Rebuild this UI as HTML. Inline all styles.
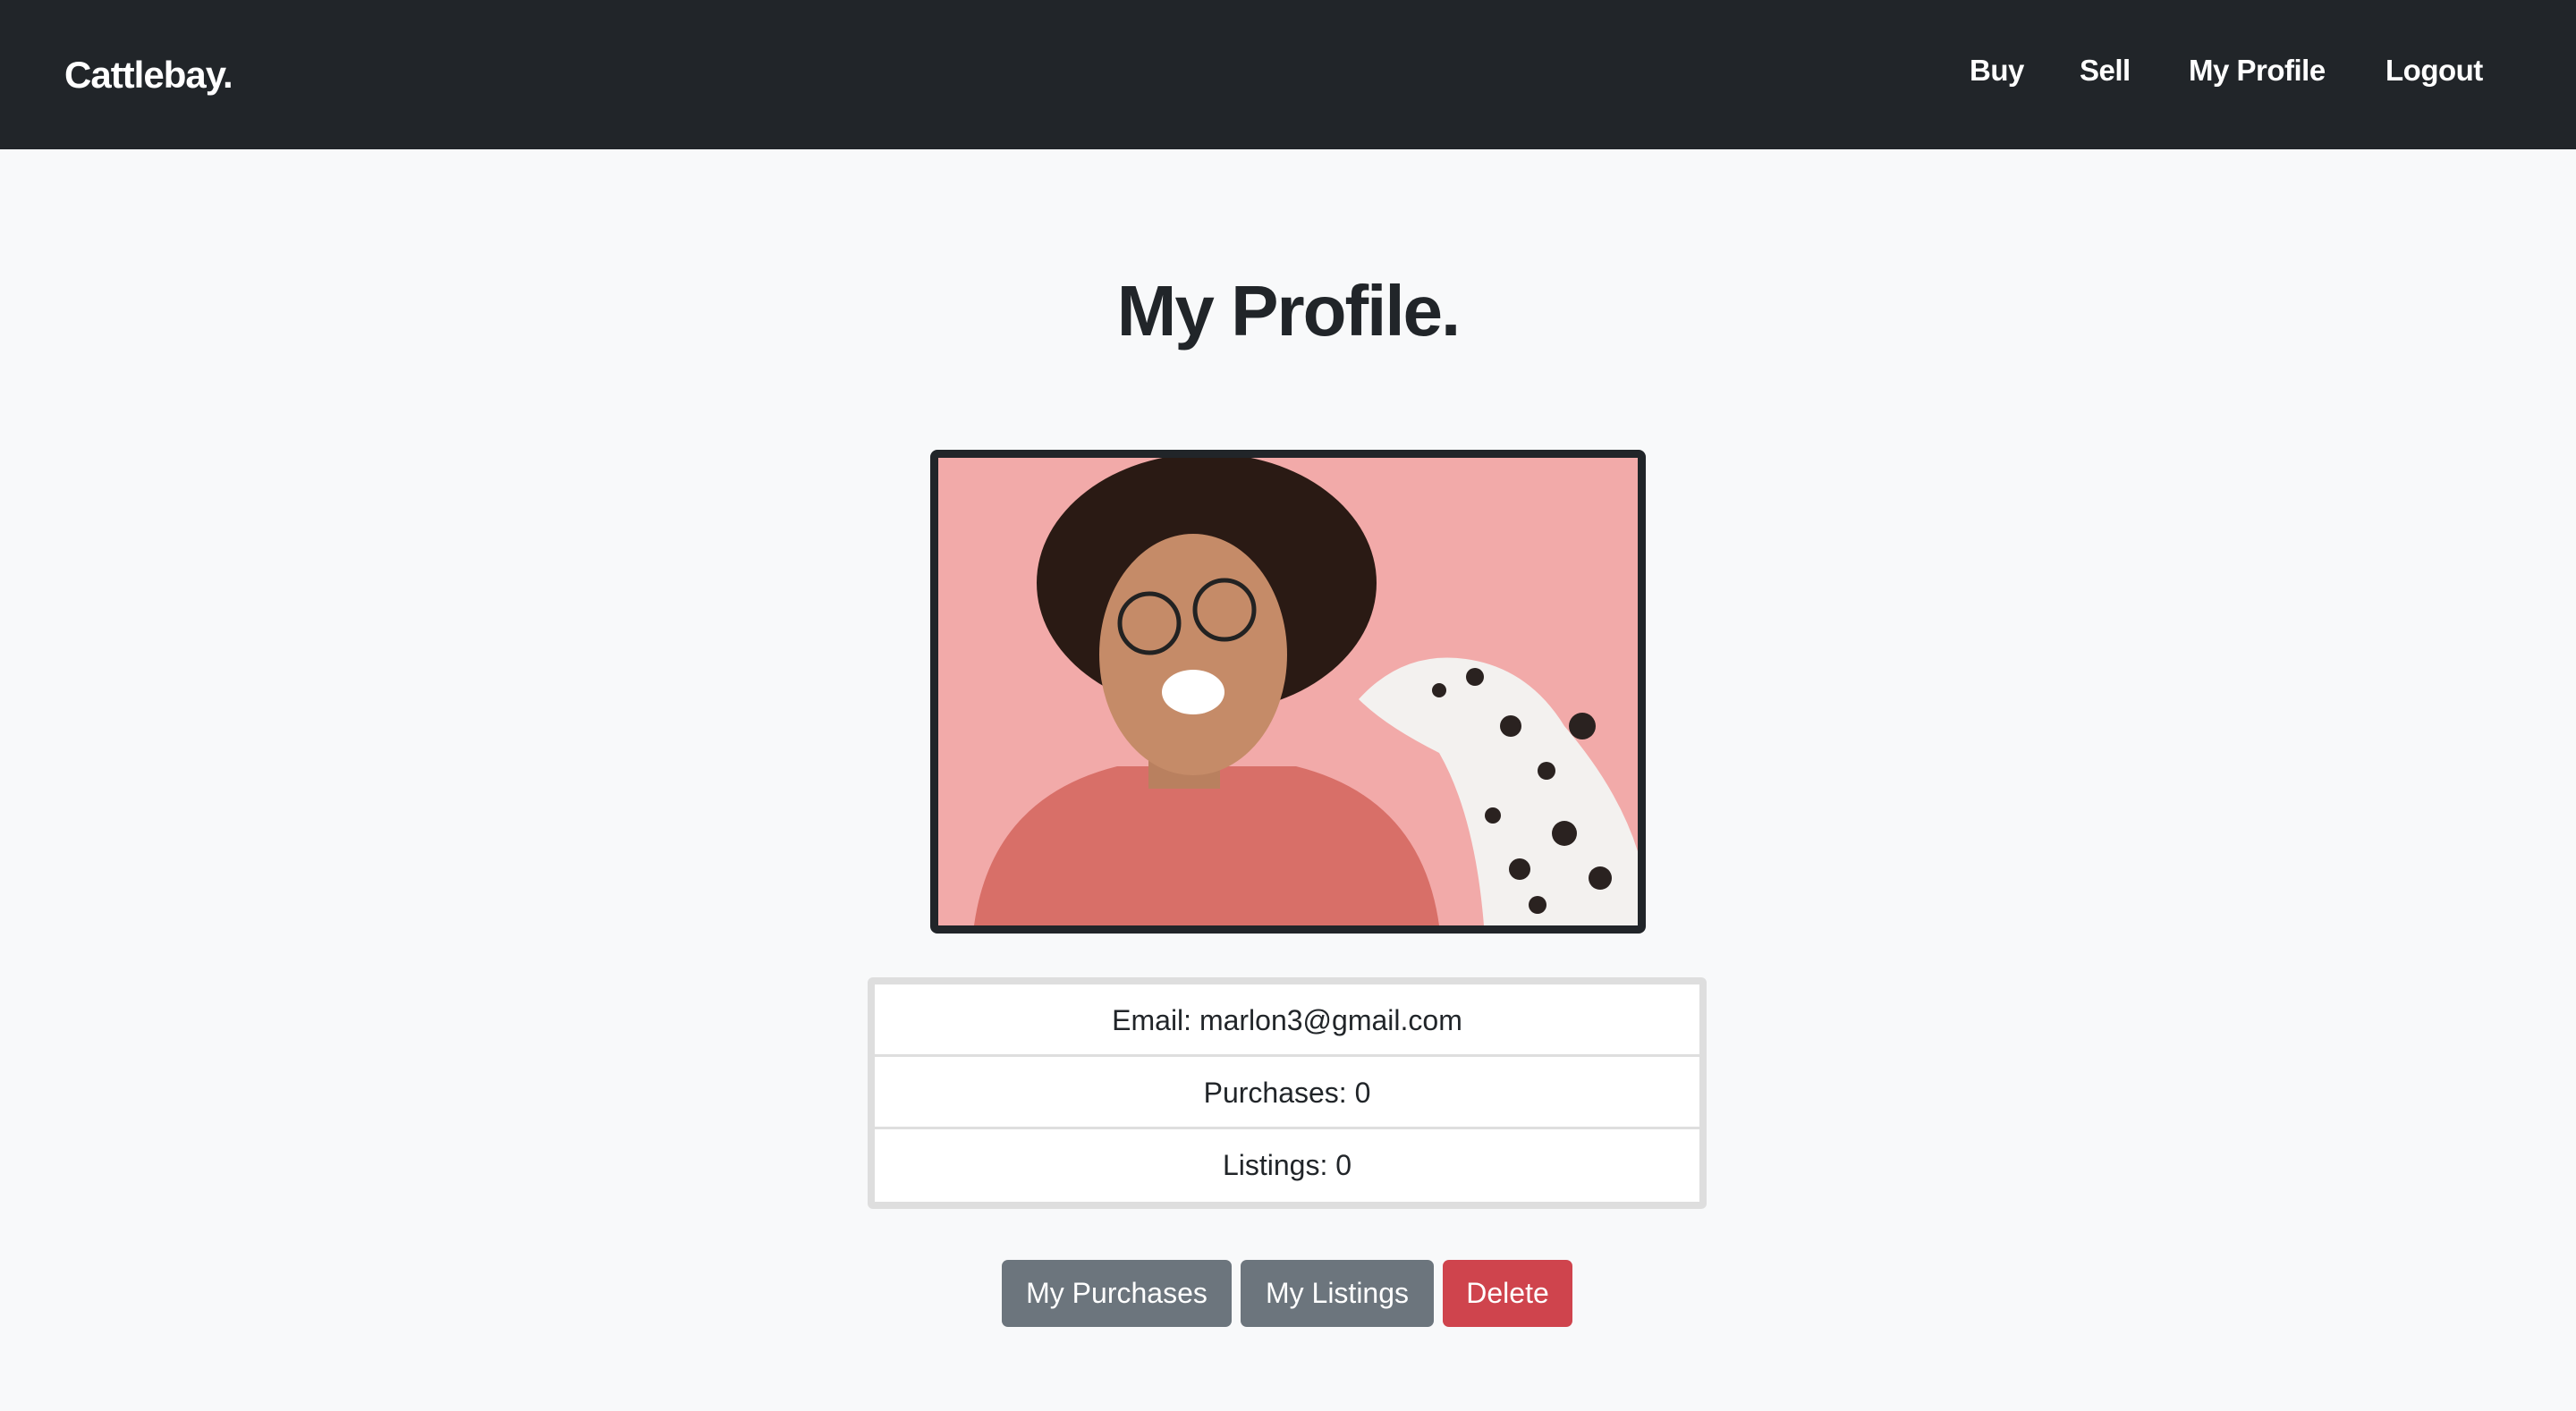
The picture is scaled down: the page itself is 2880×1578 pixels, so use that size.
<!DOCTYPE html>
<html><head><meta charset="utf-8"><style>
*{box-sizing:border-box;margin:0;padding:0}
body{width:2880px;height:1578px;background:#f8f9fa;font-family:"Liberation Sans",sans-serif;color:#212529;position:relative;overflow:hidden}
.nav{position:absolute;left:0;top:0;width:2880px;height:167px;background:#212529}
.brand{position:absolute;left:72px;top:60px;font-size:42px;font-weight:bold;color:#fff;letter-spacing:-1px}
.nav a{position:absolute;top:60px;font-size:33px;font-weight:bold;color:#fff;letter-spacing:-0.5px}
h1{position:absolute;left:0;width:2880px;top:302px;text-align:center;font-size:80px;font-weight:bold;letter-spacing:-2px}
.frame{position:absolute;left:1040px;top:503px;width:800px;height:541px;border:9px solid #212529;border-radius:8px;overflow:hidden;background:#f2aaa9}
.info{position:absolute;left:970px;top:1093px;width:938px;height:259px;border:8px solid #dedede;border-radius:6px;background:#fff}
.row{height:81px;border-bottom:3px solid #dedede;text-align:center;font-size:32px;line-height:81px}
.row:last-child{border-bottom:none}
.btn{position:absolute;top:1409px;height:75px;border-radius:7px;color:#fff;font-size:32px;line-height:75px;text-align:center}
</style></head><body>
<div class="nav"><div class="brand">Cattlebay.</div>
<a style="left:2202px">Buy</a><a style="left:2325px">Sell</a><a style="left:2447px">My Profile</a><a style="left:2667px">Logout</a></div>
<h1>My Profile.</h1>
<div class="frame"><svg width="782" height="523" viewBox="0 0 782 523">
<rect width="782" height="523" fill="#f2aaa9"/>
<ellipse cx="300" cy="140" rx="190" ry="145" fill="#2a1a14"/>
<path d="M40 523 Q60 380 200 345 L400 345 Q540 380 560 523Z" fill="#d86f68"/>
<rect x="235" y="280" width="80" height="90" fill="#b9805f"/>
<ellipse cx="285" cy="220" rx="105" ry="135" fill="#c58b68"/>
<ellipse cx="285" cy="262" rx="35" ry="25" fill="#fff"/>
<circle cx="236" cy="185" r="33" fill="none" stroke="#222" stroke-width="5"/>
<circle cx="320" cy="170" r="33" fill="none" stroke="#222" stroke-width="5"/>
<path d="M470 270 Q520 215 590 225 Q660 235 700 300 Q760 370 782 440 L782 523 L610 523 Q600 400 560 330 Q500 300 470 270Z" fill="#f3f1ef"/>
<g fill="#2a2220"><circle cx="560" cy="260" r="8"/><circle cx="600" cy="245" r="10"/><circle cx="640" cy="300" r="12"/><circle cx="680" cy="350" r="10"/><circle cx="700" cy="420" r="14"/><circle cx="650" cy="460" r="12"/><circle cx="740" cy="470" r="13"/><circle cx="620" cy="400" r="9"/><circle cx="720" cy="300" r="15"/><circle cx="670" cy="500" r="10"/></g>
</svg></div>
<div class="info"><div class="row">Email: marlon3@gmail.com</div><div class="row">Purchases: 0</div><div class="row">Listings: 0</div></div>
<div class="btn" style="left:1120px;width:257px;background:#6c757d">My Purchases</div>
<div class="btn" style="left:1387px;width:216px;background:#6c757d">My Listings</div>
<div class="btn" style="left:1613px;width:145px;background:#cf444d">Delete</div>
</body></html>
